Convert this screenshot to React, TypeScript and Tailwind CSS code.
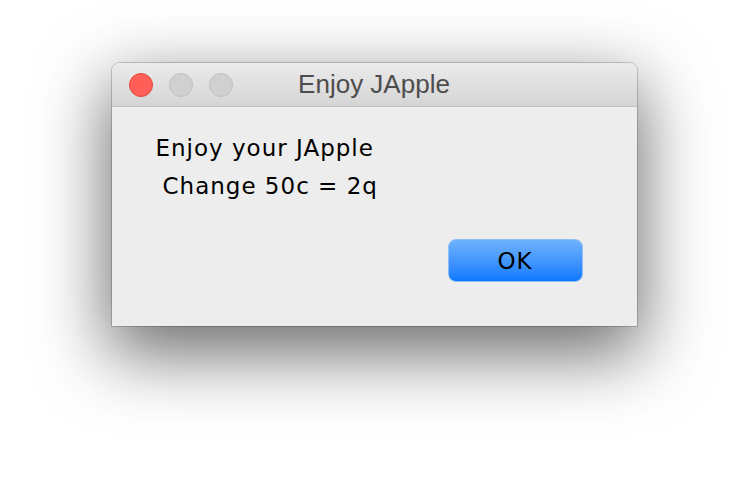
export default function App() {
  return (
    <div className="flex h-[486px] w-[748px] justify-center bg-white pt-[63px]">
      <div
        className="flex h-[263px] w-[525px] flex-col overflow-hidden rounded-t-[8px] bg-[#ededed] shadow-[0_24px_70px_4px_rgba(0,0,0,0.58),0_0_0_1px_rgba(0,0,0,0.18)]"
        style={{ fontFamily: '"DejaVu Sans", "Liberation Sans", sans-serif' }}
      >
        {/* title bar */}
        <div className="relative flex h-[44px] shrink-0 items-center border-b border-[#c3c3c3] bg-gradient-to-b from-[#ebebeb] to-[#d5d5d5] px-[17px]">
          <div className="flex gap-[16px]">
            <span className="size-[24px] rounded-full border border-[#e0443e] bg-[#ff5f57]" />
            <span className="size-[24px] rounded-full border border-[#c1c1c1] bg-[#d0d0d0]" />
            <span className="size-[24px] rounded-full border border-[#c1c1c1] bg-[#d0d0d0]" />
          </div>
          <div className="absolute inset-0 flex items-center justify-center font-['Liberation_Sans',sans-serif] text-[26px] text-[#4d4d4d]">
            Enjoy JApple
          </div>
        </div>

        {/* body */}
        <div className="flex flex-1 flex-col px-[44px] pt-[22px] text-[23px] leading-[38px] tracking-[1px] text-black">
          <div>Enjoy your JApple</div>
          <div className="pl-[7px]">Change 50c = 2q</div>
          <div className="mt-[34px] flex justify-end pr-[10px]">
            <button className="flex h-[43px] w-[135px] items-center justify-center rounded-[8px] border border-[#8fbdf5] bg-gradient-to-b from-[#6db3fb] to-[#0a78fe] text-[23px] tracking-[1px] text-black">
              OK
            </button>
          </div>
        </div>
      </div>
    </div>
  );
}
